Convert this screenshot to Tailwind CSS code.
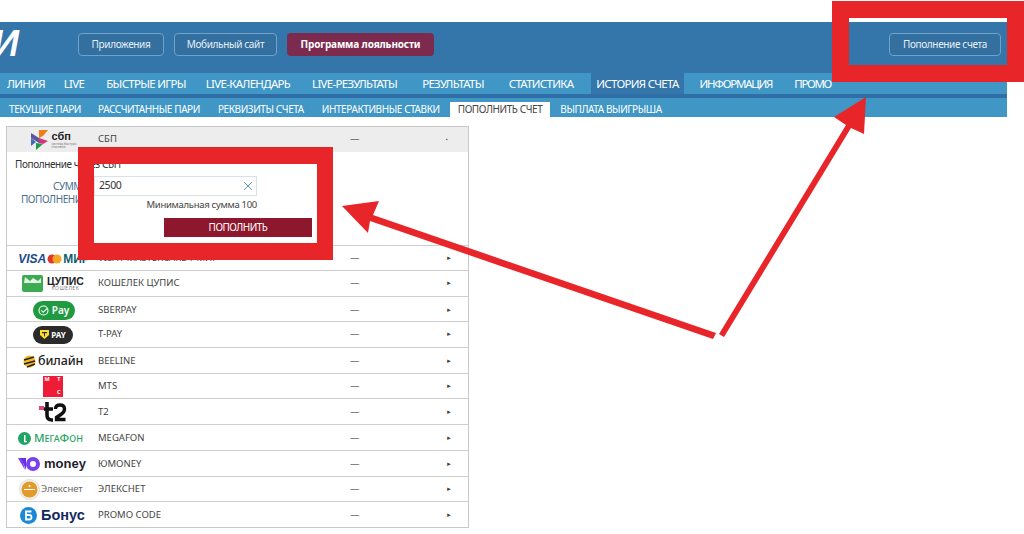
<!DOCTYPE html>
<html lang="ru">
<head>
  <meta charset="UTF-8" />
  <title>Пополнение счета</title>
  <script src="https://cdn.jsdelivr.net/npm/@tailwindcss/browser@4"></script>
</head>
<body class="relative bg-white w-[1024px] h-[534px] overflow-hidden font-['Noto_Sans',sans-serif] text-[#333]">

  <!-- Шапка -->
  <div class="w-[1007px] mt-[22px]">
    <div class="relative h-[51px] bg-[#3475aa] flex items-center pb-[7px] text-[10px] tracking-[-0.35px] text-white">
      <span class="w-[78px] text-[36px] tracking-normal leading-none italic font-bold font-['Liberation_Sans',sans-serif] -ml-[7px] mr-[7px] overflow-hidden">И</span>
      <a class="h-[23px] w-[86px] flex items-center justify-center rounded border border-[#6fa3cb] bg-[#336f9f] text-[#e6f0f7]">Приложения</a>
      <a class="h-[23px] w-[103px] ml-[10px] flex items-center justify-center rounded border border-[#6fa3cb] bg-[#336f9f] text-[#e6f0f7]">Мобильный сайт</a>
      <a class="h-[23px] w-[147px] ml-[10px] flex items-center justify-center rounded bg-[#7c2a4e] font-bold tracking-[-0.15px]">Программа лояльности</a>
      <a class="h-[23px] w-[112px] ml-auto mr-[6px] flex items-center justify-center rounded border border-[#6fa3cb] bg-[#336f9f] text-[#e6f0f7]">Пополнение счета</a>
    </div>

    <div class="h-[21px] bg-[#4097c6] flex text-[11.5px] tracking-[-0.7px] text-white pl-[3px]">
      <a class="px-[4px] mr-[11px] flex items-center">ЛИНИЯ</a>
      <a class="px-[4px] mr-[14px] flex items-center">LIVE</a>
      <a class="px-[4px] mr-[12px] flex items-center">БЫСТРЫЕ ИГРЫ</a>
      <a class="px-[4px] mr-[14px] flex items-center">LIVE-КАЛЕНДАРЬ</a>
      <a class="px-[4px] mr-[17px] flex items-center">LIVE-РЕЗУЛЬТАТЫ</a>
      <a class="px-[4px] mr-[17px] flex items-center">РЕЗУЛЬТАТЫ</a>
      <a class="px-[4px] mr-[14px] flex items-center">СТАТИСТИКА</a>
      <a class="px-[5px] mr-[12px] flex items-center bg-[#3475aa]">ИСТОРИЯ СЧЕТА</a>
      <a class="px-[4px] mr-[14px] flex items-center tracking-[-1.2px]">ИНФОРМАЦИЯ</a>
      <a class="px-[4px] flex items-center tracking-[-1.3px]">ПРОМО</a>
    </div>
    <div class="h-[4px] bg-[#2f6ea6]"></div>

    <div class="h-[19px] bg-[#4097c6] flex items-end text-[10px] tracking-[-0.4px] text-white pl-[2px]">
      <a class="h-[15px] px-[7px] mr-[3px] flex items-center">ТЕКУЩИЕ ПАРИ</a>
      <a class="h-[15px] px-[7px] mr-[4px] flex items-center">РАССЧИТАННЫЕ ПАРИ</a>
      <a class="h-[15px] px-[7px] mr-[4px] flex items-center">РЕКВИЗИТЫ СЧЕТА</a>
      <a class="h-[15px] px-[7px] mr-[3px] flex items-center">ИНТЕРАКТИВНЫЕ СТАВКИ</a>
      <a class="h-[15px] px-[8px] mr-[1px] flex items-center bg-white text-[#444]">ПОПОЛНИТЬ СЧЕТ</a>
      <a class="h-[15px] px-[9px] flex items-center">ВЫПЛАТА ВЫИГРЫША</a>
    </div>
  </div>

  <!-- Способы оплаты -->
  <div class="w-[463px] ml-[6px] mt-[9px] border border-[#c9c9c9] text-[9.5px] text-[#444]">

    <div class="h-[25px] bg-[#eeedee] grid grid-cols-[91px_252px_95px_1fr] items-center">
      <div class="flex items-center justify-center gap-[2px] pl-[2px]">
        <svg width="19" height="22" viewBox="0 0 19 22"><path d="M1 4l8 5v5L1 9z" fill="#5b57a2"/><path d="M1 9l5 4-5 4z" fill="#3a6fb5"/><path d="M9 1l9 0-5 6-4 2z" fill="#ef7f1a"/><path d="M9 9l9 3-5 3-4-1z" fill="#d9307c"/><path d="M6 14l7 1-7 6z" fill="#1a9a4b"/></svg>
        <div class="leading-none">
          <div class="text-[11px] font-bold text-[#222] font-['Liberation_Sans',sans-serif]">сбп</div>
          <div class="text-[3px] text-[#777] mt-[1px]">система быстрых<br>платежей</div>
        </div>
      </div>
      <div>СБП</div>
      <div class="text-[#222]">—</div>
      <div class="text-[5px] pl-[1px]">▪</div>
    </div>

    <div class="h-[93px] text-[10px] tracking-[-0.4px]">
      <div class="pl-[8px] pt-[5px] leading-[14px] text-[#333]">Пополнение через СБП</div>
      <div class="flex mt-[5px]">
        <div class="w-[82px] pr-[1px] pt-[4px] text-right leading-[13px] text-[#4a6f8f]">СУММА<br>ПОПОЛНЕНИЯ</div>
        <div class="w-[163px] ml-[5px]">
          <div class="h-[20px] w-[163px] border border-[#d9e2e8] bg-white relative flex items-center justify-between pl-[4px] pr-[3px] text-[10.5px] text-[#333]">
            2500
            <svg width="10" height="10" viewBox="0 0 10 10"><path d="M1 1l8 8M9 1l-8 8" stroke="#5f9fc0" stroke-width="1" fill="none"/></svg>
          </div>
          <div class="text-right pt-[2px] leading-[13px] text-[9.5px] tracking-[-0.3px]">Минимальная сумма 100</div>
        </div>
      </div>
    </div>

    <div class="flex flex-col">
      <div class="h-[25px] border-t border-[#cfcfcf] grid grid-cols-[91px_252px_95px_1fr] items-center pt-[1px]">
        <div class="flex items-center justify-center text-[12px] font-bold font-['Liberation_Sans',sans-serif] text-[#1a4a8f] pl-[3px]"><span class="italic">VISA</span><svg class="mx-[1px]" width="15" height="10" viewBox="0 0 15 10"><circle cx="5" cy="5" r="4.5" fill="#e2372b"/><circle cx="10" cy="5" r="4.5" fill="#f5a623"/></svg><span class="text-[#0f5f6f]">МИР</span></div>
        <div>VISA / MASTERCARD / МИР</div><div class="text-[#222]">—</div><div class="text-[6px] pl-[1px]">►</div>
      </div>

      <div class="h-[26px] border-t border-[#cfcfcf] grid grid-cols-[91px_252px_95px_1fr] items-center">
        <div class="flex items-center pl-[15px] gap-[4px]">
          <svg width="21" height="17" viewBox="0 0 21 17"><rect width="21" height="17" rx="2" fill="#3cab52"/><path d="M3 2l5 4 3-3 5 3 3-3v5H2z" fill="#fff" opacity=".85"/></svg>
          <div class="leading-none text-center">
            <div class="text-[10.5px] font-bold text-[#222] font-['Liberation_Sans',sans-serif]">ЦУПИС</div>
            <div class="text-[5px] text-[#777] tracking-[0.5px]">КОШЕЛЕК</div>
          </div>
        </div>
        <div>КОШЕЛЕК ЦУПИС</div><div class="text-[#222]">—</div><div class="text-[6px] pl-[1px]">►</div>
      </div>

      <div class="h-[25px] border-t border-[#cfcfcf] grid grid-cols-[91px_252px_95px_1fr] items-center pt-[2px]">
        <div class="flex justify-center pl-[2px]">
          <div class="w-[42px] h-[19px] rounded-full bg-[#1f9a41] flex items-center justify-center gap-[3px] text-white text-[10px] font-semibold">
            <svg width="11" height="11" viewBox="0 0 11 11"><circle cx="5.5" cy="5.5" r="4.5" stroke="#fff" fill="none" stroke-width="1.1"/><path d="M3.2 5.3l2 2 4-4" stroke="#fff" fill="none" stroke-width="1.1"/></svg>Pay
          </div>
        </div>
        <div>SBERPAY</div><div class="text-[#222]">—</div><div class="text-[6px] pl-[1px]">►</div>
      </div>

      <div class="h-[26px] border-t border-[#cfcfcf] grid grid-cols-[91px_252px_95px_1fr] items-center">
        <div class="flex justify-center pl-[1px]">
          <div class="w-[40px] h-[18px] rounded-full bg-[#2b2b2b] flex items-center justify-center gap-[2px] text-white text-[8px] font-bold">
            <svg width="9" height="9" viewBox="0 0 9 9"><path d="M0 0h9v5L4.500 9 0 5z" fill="#ffdd2d"/><path d="M2 2h5v1.200H5v3H4v-3H2z" fill="#2b2b2b"/></svg>PAY
          </div>
        </div>
        <div>T-PAY</div><div class="text-[#222]">—</div><div class="text-[6px] pl-[1px]">►</div>
      </div>

      <div class="h-[26px] border-t border-[#cfcfcf] grid grid-cols-[91px_252px_95px_1fr] items-center pt-[1px]">
        <div class="flex items-center pl-[16px] gap-[2px] text-[12.5px] font-medium tracking-[-0.1px] text-[#222]">
          <svg width="13" height="13" viewBox="0 0 13 13"><circle cx="6.5" cy="6.5" r="6" fill="#f5b921"/><path d="M1 5l10-3M1 9l11-3M4 12l8-3" stroke="#222" stroke-width="1.6"/></svg>билайн
        </div>
        <div>BEELINE</div><div class="text-[#222]">—</div><div class="text-[6px] pl-[1px]">►</div>
      </div>

      <div class="h-[25px] border-t border-[#cfcfcf] grid grid-cols-[91px_252px_95px_1fr] items-center">
        <div class="flex justify-center">
          <div class="w-[20px] h-[21px] bg-[#ee1c36] text-white text-[5.5px] font-bold leading-none flex flex-col justify-between px-[2px] py-[1px]">
            <div class="flex justify-between"><span>М</span><span>Т</span></div>
            <div class="text-right">С</div>
          </div>
        </div>
        <div class="pt-[1px]">MTS</div><div class="text-[#222] pt-[1px]">—</div><div class="text-[6px] pl-[1px] pt-[1px]">►</div>
      </div>

      <div class="h-[26px] border-t border-[#cfcfcf] grid grid-cols-[91px_252px_95px_1fr] items-center pt-[1px]">
        <div class="flex justify-center pl-[1px]">
          <svg width="28" height="21" viewBox="0 0 28 21"><rect x="0" y="4" width="5" height="4" fill="#e0457b"/><path d="M8 0v13q0 5 5 5h1M5 7h9" stroke="#111" stroke-width="3.600" fill="none"/><path d="M16.500 7q0-4 4.500-4t4.500 4q0 3-3 5l-5 3.500v2h9" stroke="#111" stroke-width="3.400" fill="none"/></svg>
        </div>
        <div>T2</div><div class="text-[#222]">—</div><div class="text-[6px] pl-[1px]">►</div>
      </div>

      <div class="h-[26px] border-t border-[#cfcfcf] grid grid-cols-[91px_252px_95px_1fr] items-center pt-[1px]">
        <div class="flex items-center pl-[11px] gap-[3px] text-[11.5px] font-medium text-[#1fa463]">
          <svg width="13" height="13" viewBox="0 0 13 13" class="shrink-0"><circle cx="6.5" cy="6.5" r="6.5" fill="#1fa463"/><path d="M6 3h1.500v7H6zM6 9h3v1.200H6z" fill="#fff"/></svg><span>М<span class="text-[9px]">ЕГА</span>Ф<span class="text-[9px]">ОН</span></span>
        </div>
        <div>MEGAFON</div><div class="text-[#222]">—</div><div class="text-[6px] pl-[1px]">►</div>
      </div>

      <div class="h-[26px] border-t border-[#cfcfcf] grid grid-cols-[91px_252px_95px_1fr] items-center pt-[1px]">
        <div class="flex items-center pl-[11px] gap-[4px] text-[13px] font-bold text-[#1f1f2e] font-['Liberation_Sans',sans-serif]">
          <svg width="22" height="14" viewBox="0 0 22 14" class="shrink-0"><path d="M0 1h4l3 12z" fill="#7a3ff2"/><path d="M3 1h5v12z" fill="#6a2fe0"/><circle cx="15" cy="7" r="5" stroke="#7a3ff2" stroke-width="4" fill="none"/></svg>money
        </div>
        <div>ЮMONEY</div><div class="text-[#222]">—</div><div class="text-[6px] pl-[1px]">►</div>
      </div>

      <div class="h-[25px] border-t border-[#cfcfcf] grid grid-cols-[91px_252px_95px_1fr] items-center pt-[1px]">
        <div class="flex items-center pl-[12px] gap-[1px] text-[9.5px] text-[#666]">
          <svg width="21" height="21" viewBox="0 0 21 21" class="shrink-0"><circle cx="10.500" cy="10.500" r="10" fill="#f4f1e8" stroke="#ddd"/><circle cx="10.500" cy="10.500" r="8" fill="#e39a2d"/><path d="M5 10.500h11" stroke="#fff" stroke-width="1"/><circle cx="10.500" cy="7" r="1" fill="#fff"/></svg>Элекснет
        </div>
        <div>ЭЛЕКСНЕТ</div><div class="text-[#222]">—</div><div class="text-[6px] pl-[1px]">►</div>
      </div>

      <div class="h-[26px] border-t border-[#cfcfcf] grid grid-cols-[91px_252px_95px_1fr] items-center pt-[2px]">
        <div class="flex items-center pl-[13px] gap-[4px] text-[14.5px] font-bold text-[#152a5c] font-['Liberation_Sans',sans-serif]">
          <svg width="17" height="17" viewBox="0 0 17 17" class="shrink-0"><circle cx="8.500" cy="8.500" r="8.500" fill="#1b87d8"/><path d="M11.500 4.500H6v8h3q2.500 0 2.500-2.300T9 8H6" stroke="#fff" stroke-width="1.800" fill="none"/></svg>Бонус
        </div>
        <div>PROMO CODE</div><div class="text-[#222]">—</div><div class="text-[6px] pl-[1px]">►</div>
      </div>
    </div>
  </div>

  <!-- Кнопка поверх рамки -->
  <div class="absolute left-[164px] top-[218px] w-[148px] h-[19px] bg-[#8d172c] text-white text-[10px] tracking-[-0.5px] flex items-center justify-center">ПОПОЛНИТЬ</div>

  <!-- Красные пометки поверх скриншота -->
  <div class="absolute left-[832px] top-[1px] w-[192px] h-[81px] border-[#e8262a] border-[17px]"></div>
  <div class="absolute left-[78px] top-[147px] w-[255px] h-[113px] border-[#e8262a] border-t-[17px] border-b-[17px] border-l-[16px] border-r-[16px]"></div>
  <svg class="absolute left-0 top-0 pointer-events-none" width="1024" height="534" viewBox="0 0 1024 534">
    <path d="M342 206L379 201L373 215L716 333L713 339L370 221L368 233Z" fill="#e8262a"/>
    <path d="M866 97L864 134L851 128L724 337L719 334L846 125L834 117Z" fill="#e8262a"/>
  </svg>
</body>
</html>
